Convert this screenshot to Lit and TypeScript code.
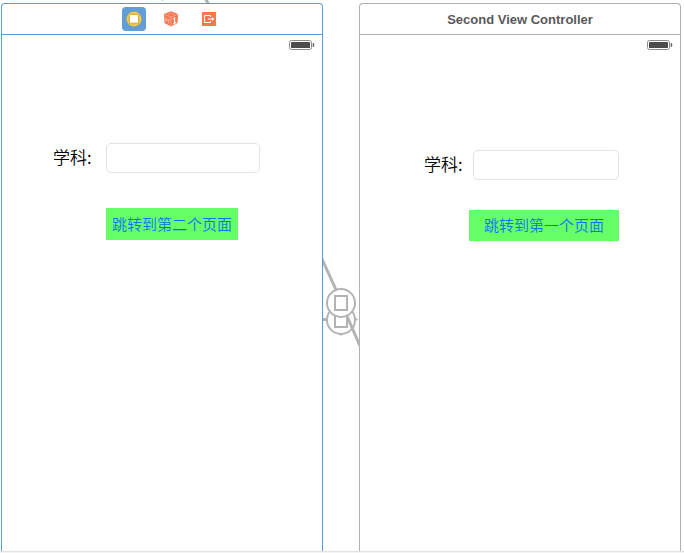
import { LitElement, html, css, svg } from "lit";
import { customElement, property } from "lit/decorators.js";
import { classMap } from "lit/directives/class-map.js";

const battery = svg`
  <rect x="0.5" y="0.5" width="22" height="9" rx="2" fill="#fff" stroke="#8a8a8a"></rect>
  <rect x="2" y="2" width="19" height="6" rx="0.6" fill="#4c4c4c"></rect>
  <path d="M24 3 Q25 3.4 25 5 Q25 6.6 24 7 Z" fill="#666" stroke="#666" stroke-width="0.6"></path>`;

@customElement("scene-dock")
class SceneDock extends LitElement {
  static styles = css`
    :host { display: flex; gap: 13px; padding-left: 18px; }
    .item {
      width: 24px; height: 24px; padding: 0; border: 0;
      border-radius: 4px; background: none; display: block;
    }
    .active { background: #619dd7; }
    svg { display: block; }
  `;

  render() {
    return html`
      <button class="item active" aria-label="View Controller">
        <svg width="24" height="24" viewBox="0 0 24 24">
          <circle cx="12" cy="12" r="7.5" fill="#f6c12f"></circle>
          <circle cx="12" cy="12" r="6.6" fill="none" stroke="#f9cf45" stroke-width="0.8"></circle>
          <rect x="7.7" y="7.7" width="8.6" height="8.4" fill="#fff" stroke="#c09a45" stroke-width="0.7"></rect>
        </svg>
      </button>
      <button class="item" aria-label="First Responder">
        <svg width="24" height="24" viewBox="0 0 24 24">
          <path d="M12 4.3 L19 7 L18.5 16 L12 19.6 L5.5 16 L5 7 Z" fill="#f8764f"></path>
          <path d="M5 7.2 L12 10 L19 7.2 M12 10 V19.5" fill="none" stroke="#fbc4b1" stroke-width="0.6"></path>
          <path d="M9 7.2 L12 6 L14.6 7.2" fill="none" stroke="#fbb49e" stroke-width="0.7"></path>
          <path d="M14.2 12.2 L15.6 11 V16.2 M14.2 17 L17 15.4" fill="none" stroke="#fff" stroke-width="1.1"></path>
          <path d="M7 10.4 V14.8 M7.2 12.6 L9.6 13.6 M9.8 11.6 V16.2" fill="none" stroke="#fbd0c1" stroke-width="0.8"></path>
        </svg>
      </button>
      <button class="item" aria-label="Exit">
        <svg width="24" height="24" viewBox="0 0 24 24">
          <rect x="6" y="5" width="14" height="14" fill="#f9784f"></rect>
          <path d="M14.5 10 V8.5 H8.5 V15.5 H14.5 V14" fill="none" stroke="#fff" stroke-width="1"></path>
          <path d="M12 12 H17" fill="none" stroke="#fff" stroke-width="1"></path>
          <path d="M16 10 L18.4 12 L16 14 Z" fill="#fff"></path>
        </svg>
      </button>`;
  }
}

@customElement("scene-panel")
class ScenePanel extends LitElement {
  @property() title = "";
  @property() action = "";
  @property({ type: Boolean }) selected = false;

  static styles = css`
    :host { display: flex; flex: 1; min-width: 0; }
    .scene {
      flex: 1; min-width: 0; box-sizing: border-box;
      border: 1px solid #b0b0b0; border-bottom: 0;
      border-radius: 4px 4px 0 0; background: #fff;
    }
    .bar {
      display: flex; align-items: center; justify-content: center;
      height: 30px; border-bottom: 1px solid #b0b0b0;
    }
    .selected, .selected .bar { border-color: #5b9bd5; }
    h2 {
      margin: 0; padding-top: 2px; color: #595959;
      font: bold 13px/16px "Liberation Sans", Arial, sans-serif;
    }
    .status { display: flex; justify-content: flex-end; height: 15px; padding: 5px 7px 0 0; }
    form { display: grid; align-items: start; }
    .first {
      grid-template-columns: 53px 1fr;
      padding: 88px 62px 0 51px; row-gap: 35px;
    }
    .second {
      grid-template-columns: 49px 1fr;
      padding: 95px 61px 0 64px; row-gap: 30px;
    }
    label {
      color: #000; white-space: nowrap;
      font: 350 17px/28px "Noto Sans CJK SC", sans-serif;
    }
    input {
      width: 100%; height: 30px; box-sizing: border-box; min-width: 0;
      border: 1px solid #e2e2e2; border-radius: 5px; background: #fff;
      padding: 0 7px; outline: none;
    }
    .jump {
      border: 0; border-radius: 0; background: #66ff66; color: #0a74f4;
      font: 350 15px/22px "Noto Sans CJK SC", sans-serif; white-space: nowrap;
    }
    .first .jump { grid-column: 2; justify-self: start; padding: 5px 6px; }
    .second .jump { grid-column: 1 / -1; justify-self: end; padding: 4px 15px 5px; }
  `;

  render() {
    return html`
      <section class=${classMap({ scene: true, selected: this.selected })}>
        <header class="bar">
          ${this.selected ? html`<scene-dock></scene-dock>` : html`<h2>${this.title}</h2>`}
        </header>
        <div class="status">
          <svg width="26" height="10" viewBox="0 0 26 10" aria-hidden="true">${battery}</svg>
        </div>
        <form class=${this.selected ? "first" : "second"}>
          <label for="subject">学科:</label>
          <input id="subject" type="text" />
          <button class="jump" type="button">${this.action}</button>
        </form>
      </section>`;
  }
}

@customElement("app-root")
class AppRoot extends LitElement {
  static styles = css`
    :host {
      display: flex; flex-direction: column; box-sizing: border-box;
      min-height: 100vh; background: #fff;
    }
    .incoming { display: block; height: 3px; width: 100%; }
    main { display: flex; flex: 1; padding: 0 3px 0 1px; }
    .segues { width: 36px; height: 90px; margin-top: 255px; flex: none; overflow: hidden; }
    footer { height: 1px; border-top: 1px solid #e2e2e2; background: #f4f4f4; }
  `;

  render() {
    return html`
      <svg class="incoming" aria-hidden="true">
        <path d="M205.5 -1 L208.5 4" stroke="#b3b3b3" stroke-width="3"></path>
        <circle cx="162.5" cy="0" r="1" fill="#c4c4c4"></circle>
      </svg>
      <main>
        <scene-panel selected action="跳转到第二个页面"></scene-panel>
        <svg class="segues" viewBox="323 258 36 90" aria-hidden="true">
          <g fill="none" stroke="#b3b3b3">
            <path d="M322 259 L337 292" stroke-width="3"></path>
            <path d="M322 319.5 H328" stroke-width="3"></path>
            <circle cx="341" cy="320" r="14" fill="#fff" stroke-width="2"></circle>
            <path d="M355 317.5 L358 319.5 L355 321.5 Z M339 334 L341 336 L343 334 Z" fill="#b3b3b3" stroke="none"></path>
            <rect x="335" y="313" width="12" height="14" stroke-width="2"></rect>
            <path d="M346 314 L360 346" stroke-width="3"></path>
            <circle cx="341" cy="303" r="14" fill="#fff" stroke-width="2"></circle>
            <rect x="335" y="296" width="12" height="14" stroke-width="2"></rect>
          </g>
        </svg>
        <scene-panel title="Second View Controller" action="跳转到第一个页面"></scene-panel>
      </main>
      <footer></footer>`;
  }
}
